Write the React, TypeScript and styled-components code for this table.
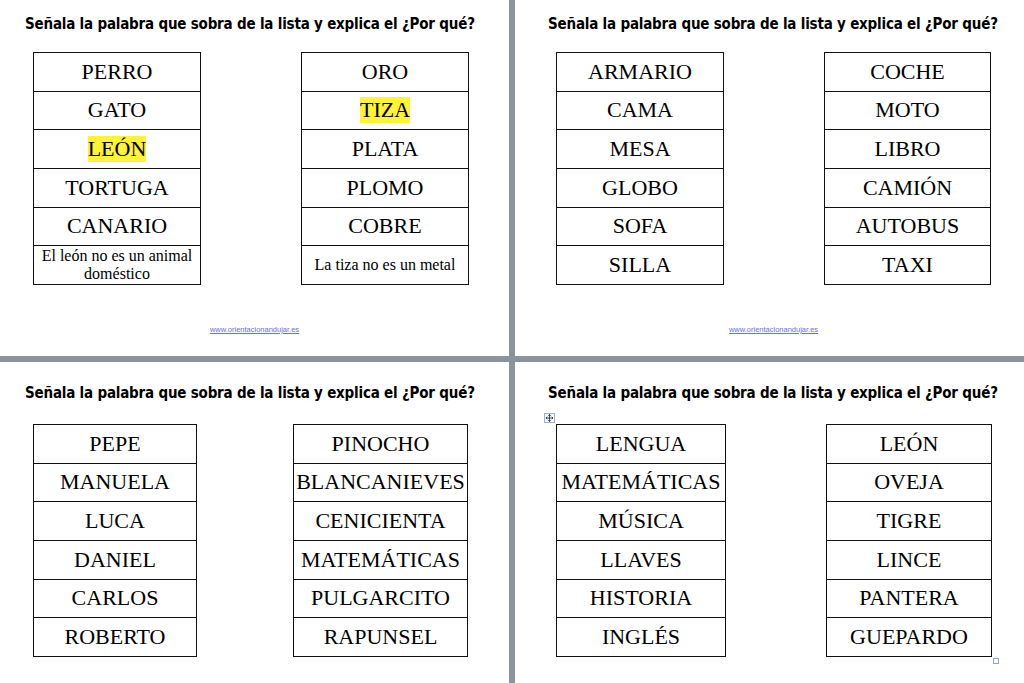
import React from "react";
import styled, { createGlobalStyle } from "styled-components";

const Global = createGlobalStyle`
  html, body { margin: 0; padding: 0; background: #8d939c; }
  body { width: 1024px; height: 683px; overflow: hidden; }
`;

const Desk = styled.div`
  display: grid;
  grid-template-columns: 509px 509px;
  grid-template-rows: 356px 321px;
  column-gap: 6px;
  row-gap: 6px;
  width: 1024px;
  height: 683px;
  background: #8d939c;
`;

const Page = styled.div<{ $shift: number; $top: number }>`
  position: relative;
  background: #ffffff;
  padding-left: ${(p) => p.$shift}px;
  padding-top: ${(p) => p.$top}px;
  box-sizing: border-box;
  overflow: hidden;
`;

const Title = styled.h1`
  margin: 0;
  padding-left: 25px;
  font-family: "DejaVu Sans Condensed", "DejaVu Sans", sans-serif;
  font-weight: bold;
  font-size: 15px;
  line-height: 20px;
  letter-spacing: -0.2px;
  color: #000;
  white-space: nowrap;
`;

const Tables = styled.div<{ $gap: number; $mt: number }>`
  display: flex;
  align-items: flex-start;
  padding-left: 33px;
  margin-top: ${(p) => p.$mt}px;
  gap: ${(p) => p.$gap}px;
`;

const WordTable = styled.div<{ $w: number }>`
  position: relative;
  width: ${(p) => p.$w}px;
  border: 1px solid #111;
  border-bottom: none;
  box-sizing: border-box;
`;

const Cell = styled.div<{ $h: number }>`
  height: ${(p) => p.$h}px;
  border-bottom: 1px solid #111;
  box-sizing: border-box;
  display: flex;
  align-items: center;
  justify-content: center;
  text-align: center;
  font-family: "Liberation Serif", "Times New Roman", serif;
  font-size: 22px;
  color: #000;
  white-space: nowrap;
`;

const NoteCell = styled(Cell)`
  font-size: 16px;
  line-height: 18px;
  white-space: normal;
  padding: 0 2px;
`;

const Mark = styled.span`
  background: #fff338;
`;

const Link = styled.div`
  margin-top: 40px;
  text-align: center;
  font-family: "Liberation Sans", Arial, sans-serif;
  font-size: 7.5px;
  color: #6b6bf0;
  text-decoration: underline;
`;

const MoveHandle = styled.div`
  position: absolute;
  left: -13px;
  top: -12px;
  width: 11px;
  height: 10px;
  border: 1px solid #9db0d6;
  background: #f4f7fd;
  box-sizing: border-box;
  display: flex;
  align-items: center;
  justify-content: center;
`;

const ResizeHandle = styled.div`
  position: absolute;
  right: -8px;
  bottom: -7px;
  width: 6px;
  height: 6px;
  border: 1px solid #8fa3cf;
  background: #fff;
  box-sizing: border-box;
`;

type Word = string | { hl: string };

const renderWord = (w: Word) =>
  typeof w === "string" ? w : <Mark>{w.hl}</Mark>;

const ROW = 38.67;

const List: React.FC<{
  words: Word[];
  w: number;
  note?: React.ReactNode;
  move?: boolean;
  resize?: boolean;
}> = ({ words, w, note, move, resize }) => (
  <WordTable $w={w}>
    {words.map((word, i) => (
      <Cell key={i} $h={ROW}>
        {renderWord(word)}
      </Cell>
    ))}
    {note && <NoteCell $h={ROW}>{note}</NoteCell>}
    {move && (
      <MoveHandle>
        <svg width="9" height="8" viewBox="0 0 9 8">
          <path
            d="M4.5 0.5 L4.5 7.5 M1 4 L8 4 M3.3 1.7 L4.5 0.5 L5.7 1.7 M3.3 6.3 L4.5 7.5 L5.7 6.3 M2.2 2.8 L1 4 L2.2 5.2 M6.8 2.8 L8 4 L6.8 5.2"
            stroke="#333"
            strokeWidth="0.9"
            fill="none"
          />
        </svg>
      </MoveHandle>
    )}
    {resize && <ResizeHandle />}
  </WordTable>
);

const TITLE = "Señala la palabra que sobra de la lista y explica el ¿Por qué?";

export default function App() {
  return (
    <>
      <Global />
      <Desk>
        <Page $shift={0} $top={14}>
          <Title>{TITLE}</Title>
          <Tables $gap={100} $mt={18}>
            <List
              w={168}
              words={["PERRO", "GATO", { hl: "LEÓN" }, "TORTUGA", "CANARIO"]}
              note={
                <>
                  El león no es un animal
                  <br />
                  doméstico
                </>
              }
            />
            <List
              w={168}
              words={["ORO", { hl: "TIZA" }, "PLATA", "PLOMO", "COBRE"]}
              note="La tiza no es un metal"
            />
          </Tables>
          <Link>www.orientacionandujar.es</Link>
        </Page>
        <Page $shift={8} $top={14}>
          <Title>{TITLE}</Title>
          <Tables $gap={100} $mt={18}>
            <List w={168} words={["ARMARIO", "CAMA", "MESA", "GLOBO", "SOFA", "SILLA"]} />
            <List w={167} words={["COCHE", "MOTO", "LIBRO", "CAMIÓN", "AUTOBUS", "TAXI"]} />
          </Tables>
          <Link>www.orientacionandujar.es</Link>
        </Page>
        <Page $shift={0} $top={21}>
          <Title>{TITLE}</Title>
          <Tables $gap={96} $mt={21}>
            <List w={164} words={["PEPE", "MANUELA", "LUCA", "DANIEL", "CARLOS", "ROBERTO"]} />
            <List
              w={175}
              words={["PINOCHO", "BLANCANIEVES", "CENICIENTA", "MATEMÁTICAS", "PULGARCITO", "RAPUNSEL"]}
            />
          </Tables>
        </Page>
        <Page $shift={8} $top={21}>
          <Title>{TITLE}</Title>
          <Tables $gap={100} $mt={21}>
            <List
              w={170}
              move
              words={["LENGUA", "MATEMÁTICAS", "MÚSICA", "LLAVES", "HISTORIA", "INGLÉS"]}
            />
            <List
              w={166}
              resize
              words={["LEÓN", "OVEJA", "TIGRE", "LINCE", "PANTERA", "GUEPARDO"]}
            />
          </Tables>
        </Page>
      </Desk>
    </>
  );
}
